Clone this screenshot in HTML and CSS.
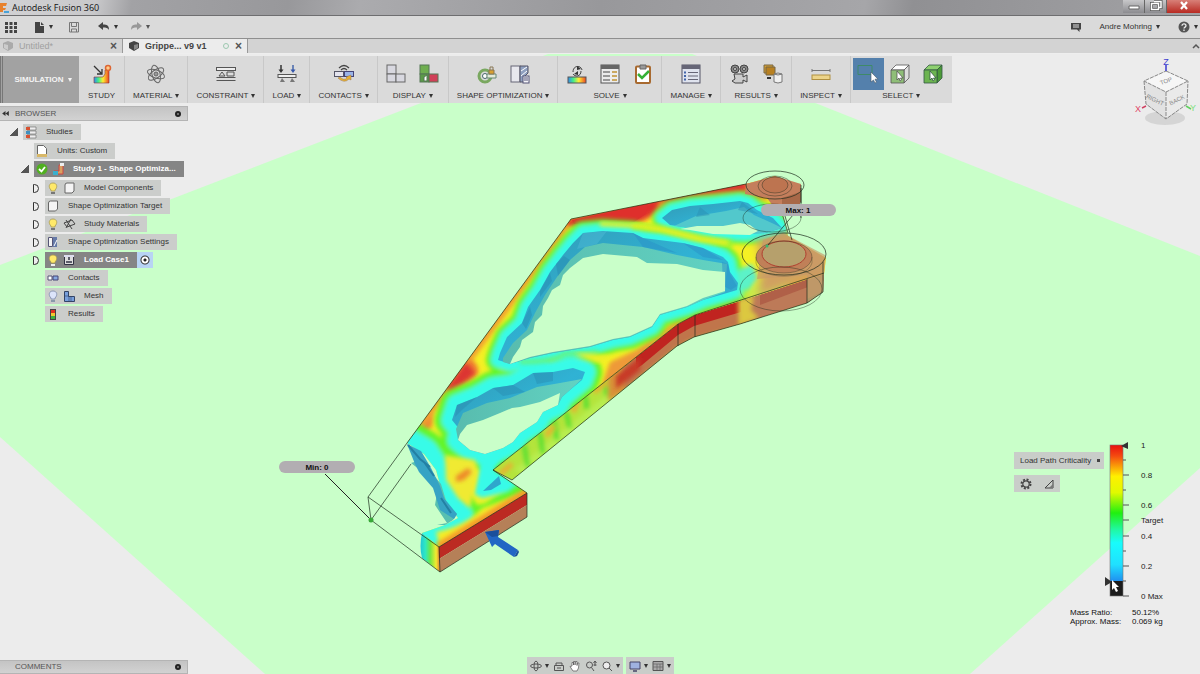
FILE: index.html
```html
<!DOCTYPE html>
<html lang="en">
<head>
    <meta charset="UTF-8">
    <meta name="viewport" content="width=device-width, initial-scale=1.0">
    <title>Autodesk Fusion 360</title>
    <link rel="stylesheet" href="styles.css">
</head>
<body>
    <header class="titlebar">
        <svg class="app-logo" viewBox="0 0 10 14"><path d="M0 2h7l-1 3H3v2h3L5 9H3v2H0z" fill="#e8812c"/><path d="M4 10h5v2H4z" fill="#4aa3d8"/></svg>
        <h1>Autodesk Fusion 360</h1>
        <div class="window-buttons">
            <button type="button" aria-label="Minimize"><svg viewBox="0 0 20 13"><path d="M5 6h10v3H5z" fill="#fff" stroke="#666"/></svg></button>
            <button type="button" aria-label="Restore"><svg viewBox="0 0 20 13"><path d="M8 1.500h7v6h-2M5.500 3.500h7v6h-7z" fill="none" stroke="#555" stroke-width="3"/><path d="M8 1.500h7v6h-2M5.500 3.500h7v6h-7z" fill="none" stroke="#fff" stroke-width="1.500"/></svg></button>
            <button type="button" class="close" aria-label="Close"><svg viewBox="0 0 20 13"><path d="M7 2l6 7M13 2l-6 7" stroke="#fff" stroke-width="2.200"/></svg></button>
        </div>
    </header>

    <div class="quickbar">
        <button type="button" aria-label="Data panel"><svg class="i12" viewBox="0 0 12 12"><path d="M0 1h3v3H0zM4.500 1h3v3h-3zM9 1h3v3H9zM0 5h3v3H0zM4.500 5h3v3h-3zM9 5h3v3H9zM0 9h3v3H0zM4.500 9h3v3h-3zM9 9h3v3H9z" fill="#444"/></svg></button>
        <button type="button" class="q-file" aria-label="File"><svg class="i12" viewBox="0 0 12 12"><path d="M2 1h5v4h4v7H2z" fill="#444"/><path d="M8 1l3 3H8z" fill="#444"/></svg><i class="caret"></i></button>
        <button type="button" class="q-save" aria-label="Save"><svg class="i12" viewBox="0 0 12 12"><path d="M1.500 1.500h9v9.500h-9zM3.500 1.500v4h5v-4M3.500 11V8h5v3" fill="none" stroke="#777"/></svg></button>
        <button type="button" class="q-undo" aria-label="Undo"><svg class="i12" viewBox="0 0 12 12"><path d="M0 5l5-4v2.500c4 0 6 1 6 5.500-1-2-3-2.500-6-2.500V9z" fill="#444"/></svg><i class="caret"></i></button>
        <button type="button" class="q-redo" aria-label="Redo"><svg class="i12" viewBox="0 0 12 12"><path d="M12 5L7 1v2.500C3 3.500 1 4.500 1 9c1-2 3-2.500 6-2.500V9z" fill="#888"/></svg><i class="caret"></i></button>
        <div class="quickbar-right">
            <button type="button" aria-label="Notifications"><svg class="i12" viewBox="0 0 12 12"><path d="M1 2h10v6.500H9.500V11L7 8.500H1z" fill="#444"/><path d="M3 4h6M3 6h6" stroke="#ddd"/></svg></button>
            <button type="button" class="q-user">Andre Mohring <i class="caret"></i></button>
            <button type="button" aria-label="Help"><svg class="i12" viewBox="0 0 12 12"><circle cx="6" cy="6" r="5.500" fill="#555"/><path d="M4 4.800c0-2.500 4-2.500 4 0C8 6.200 6 6 6 7.500M6 8.500v1.500" fill="none" stroke="#eee" stroke-width="1.300"/></svg><i class="caret"></i></button>
        </div>
    </div>

    <nav class="tabs">
        <a class="tab" href="#untitled"><svg class="i10" viewBox="0 0 10 10"><path d="M0 2l5-2 5 2v5l-5 3-5-3z" fill="#aaa"/><path d="M1 3l4 1v5L1 7z" fill="#ccc"/></svg><span>Untitled*</span><b class="x">&times;</b></a>
        <a class="tab active" href="#gripper"><svg class="i10" viewBox="0 0 10 10"><path d="M0 2l5-2 5 2v5l-5 3-5-3z" fill="#444"/><path d="M5 4l4-1v4L5 9z" fill="#888"/></svg><span>Grippe... v9 v1</span><i class="ring"></i><b class="x">&times;</b></a>
        <svg class="tabs-more" viewBox="0 0 8 6"><path d="M1 5l3-3 3 3" fill="none" stroke="#555" stroke-width="1.500"/></svg>
    </nav>

    <main class="viewport">
        <svg class="scene" viewBox="0 54 1200 620" preserveAspectRatio="xMidYMid slice">
            <defs>
                <filter id="soft" x="-20%" y="-20%" width="140%" height="140%"><feGaussianBlur stdDeviation="2"/></filter>
                <filter id="softer" x="-40%" y="-40%" width="180%" height="180%"><feGaussianBlur stdDeviation="4"/></filter>
                <clipPath id="face"><path d="M407 443L571 219 746 184 775 176 801 188 799 203 782 213 788 236 826 258 824 274 740 301 695 315 678 324 493 470 527 493 439 547 422 533 445 525 458 518 447 503 441 488 436 470 424 454z"/></clipPath>
                <clipPath id="side"><path d="M493 470L678 324 695 315 740 301 824 273 823 292 807 303 740 324 694 337 677 346 512 480z"/></clipPath>
                <linearGradient id="endface" x1="0" x2="1" y1="0" y2="0"><stop offset="0" stop-color="#22c8d8"/><stop offset=".25" stop-color="#2fe8c0"/><stop offset=".5" stop-color="#6de848"/><stop offset=".8" stop-color="#f2ea30"/><stop offset="1" stop-color="#e07830"/></linearGradient>
                <linearGradient id="wall" x1="0" x2="1" y1="0" y2="1"><stop offset="0" stop-color="#3299b4"/><stop offset=".5" stop-color="#30b2d4"/><stop offset="1" stop-color="#36a6c8"/></linearGradient>
                <linearGradient id="wallLow" x1="0" x2="1" y1="0" y2="0"><stop offset="0" stop-color="#58bcae"/><stop offset="1" stop-color="#62d2c2"/></linearGradient>
                <path id="holeTop" d="M662 218l10-8 18-4 23-2 27-3 8 2 9 7 16 8 9 10-17 5-20 1-32-1-23-5-20-3z"/>
                <path id="holeMid" d="M583 233l20-2 30 2 10 5 40 5 20 5 20 9 5 5 2 10 8 11-1 7-10 3-24 7-16 7-27 8-8 12-22 10-17 3-23 7-37 6-23 5-20 6-12-4 2-7 7-16 15-14 6-16 12-17 10-18 13-17 10-12z"/>
                <path id="holeLow" d="M452 420l5-15 20-8 16-9 20-3 20-12 20-1 20-4 12 4-3 8-12 10-8 7-4 8-15 7-6 10-17 11-7 9-10 6-18 6-15-4-12-10 2-10z"/>
                <path id="cut" d="M400 438l24 14 12 18 7 18 5 15 11 14-13 8-26 8v20"/>
            </defs>

            <path d="M548 54H692L1200 256V468L970 674H265L0 437V265z" fill="#c9ffc9"/>

            <!-- side walls -->
            <g clip-path="url(#side)">
                <path d="M480 300H840V490H480z" fill="#b4e43c"/>
                <g filter="url(#soft)">
                    <path d="M515 470l110-90v25l-90 75z" fill="#b8ee50"/>
                    <path d="M524 445l4 22M540 432l3 22M554 420l3 20M566 412l4 16M585 395l2 14M602 378l6 18" stroke="#5ce030" stroke-width="5"/>
                    <path d="M500 474l12-10M546 436l8-10M573 412l6-14M594 392l12-10" stroke="#e8b030" stroke-width="5"/>
                    <path d="M618 369L678 322 695 313 742 299V326L694 339 677 348 618 396z" fill="#c0744c"/>
                    <path d="M608 376l16-10v26l-16 10z" fill="#d89038"/>
                </g>
                <path d="M636 357l42-33 17-9 46-14v11l-47 14-16 9-36 30-6 4z" fill="#c02420"/>
                <path d="M616 376l24-19v13l-24 19z" fill="#c83a28" filter="url(#soft)"/>
                <path d="M741 301l83-28v18l-16 12-67 21z" fill="#bd7a58"/>
                <path d="M760 295l64-22v8l-64 24z" fill="#b06048"/>
                <path d="M807 277l18-6v24l-18 10z" fill="#b09868"/>
                <path d="M738 300l16-4-3 14 8 8-20 8z" fill="#dcc840" filter="url(#soft)"/>
            </g>

            <!-- top face with the criticality bands -->
            <g clip-path="url(#face)">
                <path d="M360 160H840V580H360z" fill="#f5f024"/>
                <g filter="url(#soft)">
                    <path d="M407 443L571 219" fill="none" stroke="#f0a030" stroke-width="8"/>
                    <path d="M610 374L678 322 695 313 824 272" fill="none" stroke="#f0a030" stroke-width="6"/>
                    <path d="M566 222l84-16 50-16 48-10 22 20-70 0-42 12-14 10-36 3-36 0z" fill="#f08a30"/>
                    <path d="M441 395l30-36c5 4 8 8 7 14-4 8-16 12-24 18z" fill="#f07a30"/>
                    <path d="M416 435l18-22-2 14-10 8z" fill="#f08a30"/>
                    <path d="M600 390l10-28 26-12 25-13-30 32z" fill="#ee9a38"/>
                </g>
                <path d="M650 203l20-8 76-14v10l-36 3-40 8z" fill="#e03030" filter="url(#soft)"/>
                <path d="M568 220l92-22-4 14-22 11h-30l-36 3z" fill="#df2f2c" filter="url(#soft)"/>
                <path d="M572 220l76-16-2 10-12 8h-30l-30 2z" fill="#df2f2c"/>
                <path d="M447 388l19-26 9 11-12 10-14 8z" fill="#dc3530" filter="url(#soft)"/>
                <g fill="none" stroke-linejoin="round" filter="url(#soft)">
                    <use href="#holeTop" stroke="#62f52c" stroke-width="20"/>
                    <use href="#holeMid" stroke="#62f52c" stroke-width="24"/>
                    <use href="#holeLow" stroke="#62f52c" stroke-width="34"/>
                    <use href="#cut" stroke="#62f52c" stroke-width="44"/>
                    <path d="M488 448l8 22 22 20-30 20-40 8" stroke="#62f52c" stroke-width="14"/>
                    <path d="M498 368l42-4 54-8" stroke="#7df23c" stroke-width="9"/>
                    <use href="#holeTop" stroke="#38fbe8" stroke-width="12"/>
                    <use href="#holeMid" stroke="#38fbe8" stroke-width="14"/>
                    <use href="#holeLow" stroke="#38fbe8" stroke-width="21"/>
                    <use href="#cut" stroke="#38fbe8" stroke-width="28"/>
                </g>
                <path d="M632 226l30 3 36 9 34 6" fill="none" stroke="#9cf430" stroke-width="7" filter="url(#soft)"/>
                <path d="M600 224l40 2 24 4 36 9 28 4" fill="none" stroke="#f4f024" stroke-width="4" filter="url(#soft)"/>
                <path d="M483 450l13-10 18-2-20 32 24 14-10 8-26 6-8-4z" fill="#38fbe8" filter="url(#soft)"/>
                <path d="M436 532q30-6 46-24 22-8 44-16v14l-84 48z" fill="#f4ee28" filter="url(#soft)"/>
                <path d="M439 547L530 491" fill="none" stroke="#f49a2a" stroke-width="9" filter="url(#soft)"/>
                <path d="M520 362q35 0 44-8l34-2M500 440l60-48" fill="none" stroke="#80f040" stroke-width="4" filter="url(#soft)" opacity=".7"/>
                <path d="M445 455l30 5 3 10-8 38-12-10-12-18z" fill="#f0ea30" filter="url(#soft)"/>
                <path d="M456 476l12-8 4 4-8 8-8 2z" fill="#ee8a2c" filter="url(#soft)"/>
                <path d="M574 353l18 1 20 2-15 7z" fill="#eef028" filter="url(#soft)"/>
                <path d="M742 292q20-18 46-16v14l-44 14z" fill="#c8f048" filter="url(#softer)"/>
                <path d="M738 270l14-6 6 14-10 12-10-2z" fill="#5cf2c8" filter="url(#soft)"/>
                <path d="M756 240l30-8 42 20-2 22-68 22 4-30z" fill="#d0a060" filter="url(#softer)"/>
            </g>

            <!-- hole walls -->
            <use href="#holeTop" fill="url(#wall)"/>
            <path d="M674 226l22-10 30-5 18-4 10 8 20 9 8 4-17 5-20 1-32-1-23-5z" fill="#52c8cc"/>
            <path d="M700 207l10 8-14 2zM742 202l16 12-20-4z" fill="#2b8fb4" opacity=".5"/>
            <path d="M680 229l17-3 26 0 17-3 10 2 8 6-8 4-37-1-23-4z" fill="#c9ffc9"/>
            <use href="#holeMid" fill="url(#wall)"/>
            <path d="M510 364L503 362 503 358 513 343 527 330 535 313 545 295 557 277 570 260 585 247 603 243 643 247 677 255 703 260 727 264 725 292 703 300 687 307 660 315 652 327 630 337 613 340 590 347 553 353 530 358z" fill="url(#wallLow)"/>
            <path d="M556 264l8-8 6 4-12 16zM540 291l10-18 2 8-12 16zM522 323l8-16 2 8-6 14z" fill="#2585ac" opacity=".4"/>
            <path d="M633 233l10 14 34 6-34-15zM683 243l20 14 20 3-20-12zM722 262l6 2 2 10 7 12-6 4-8-4z" fill="#2a90c8" opacity=".5"/>
            <path d="M583 233l-6 16 20-5 10-13z" fill="#60c8e0" opacity=".3"/>
            <path d="M510 364L513 357 520 347 522 340 533 332 535 322 542 315 543 306 548 298 552 290 560 285 563 275 570 268 583 258 603 254 637 257 647 263 677 264 703 270 725 272 725 291 703 298 687 306 660 314 652 326 630 336 613 339 590 346 553 352 530 357z" fill="#c9ffc9"/>
            <use href="#holeLow" fill="url(#wall)"/>
            <path d="M456 429L463 413 487 403 510 398 537 387 560 383 582 379 570 390 562 397 558 405 543 412 537 422 520 433 513 442 503 448 485 454 470 450 458 440z" fill="url(#wallLow)"/>
            <path d="M457 405l20-8-14 12-8 8zM493 388l10 8 22-4-12-7zM533 373l4 11 16-3 0-9z" fill="#2786ac" opacity=".4"/>
            <path d="M458 440L460 434 467 425 483 420 500 413 512 408 520 407 540 402 560 393 558 405 543 412 537 422 520 433 513 442 503 448 485 454 470 450z" fill="#c9ffc9"/>
            <path d="M411 463l18 14 8 16-2 12 12 18-10 2 8 0 8-5 4-6-10-10-6-20-20-24z" fill="#58c0b0"/>
            <path d="M407 444l14 7 10 17 9 18 4 12 13 16-3 5-14-9-7-22-14-16-4-8z" fill="#36a3c4"/>
            <path d="M408 445l12 14 10 8M424 462l10 14M441 498l10 15" stroke="#2380a4" stroke-width="2" fill="none"/>
            <path d="M483 491l16-15 2 8-10 6z" fill="#2fa6cc"/>

            <!-- clamping block -->
            <path d="M422 533l17 14 1 25-18-14q-3-12 0-25z" fill="url(#endface)"/>
            <path d="M439 547l88-54v12l-88 54z" fill="#bc2a22"/>
            <path d="M439 559l88-54v12l-87 55z" fill="#b58058"/>

            <!-- pins -->
            <path d="M746 184l29-8 26 8v18l-22 12-12-16-22-4z" fill="#c47e5c"/>
            <path d="M782 198l18-6v12l-18 8z" fill="#a86848"/>
            <path d="M763 240l20-7 42 22-2 36-16 8v-24l-50 4z" fill="#c89868" opacity=".65"/>
            <ellipse cx="784" cy="257" rx="28" ry="16" fill="#c08058"/>
            <ellipse cx="784" cy="254" rx="22" ry="13" fill="#b6a06c" stroke="#b04030"/>
            <ellipse cx="775" cy="185" rx="13" ry="8" fill="#bd7450"/>

            <g class="wire">
                <path d="M571 219L407 443 368 497 439 547 527 493 493 470 678 324 695 315 824 273M571 219L746 184M439 547l1 25 87-55V493M440 572L371 520 368 497M371 520l40-56M512 480L677 346l17-9 46-13 67-21 16-11V262M678 324v22M695 315v22M807 279v24M801 188v15"/>
                <path d="M493 470l19 10M782 213l6 20M785 216l7 24M793 215l-25 30M801 185v33"/>
                <ellipse cx="784" cy="254" rx="42" ry="21"/>
                <ellipse cx="781" cy="289" rx="41" ry="22" opacity=".6"/>
                <ellipse cx="784" cy="257" rx="28" ry="16" opacity=".5"/>
                <path d="M756 257v6c3 17 51 18 56 0v-6" opacity=".4"/>
                <ellipse cx="775" cy="185" rx="29" ry="14"/>
                <ellipse cx="772" cy="218" rx="29" ry="14" opacity=".6"/>
                <ellipse cx="775" cy="186" rx="17" ry="10" opacity=".6"/>
                <ellipse cx="775" cy="185" rx="13" ry="8" opacity=".6"/>
            </g>
            <path d="M325 474L371 520" stroke="#222"/>
            <circle cx="371" cy="520" r="2.500" fill="#38a838"/>
            <circle cx="767" cy="246" r="1.500" fill="#38b870"/>
            <path d="M485 532L499 530 498 537 518 550 514 557 495 544 492 547z" fill="#2266c4"/>
            <path d="M485 532L499 530 498 536 492 537zM518 550L514 557 517 556 519 552z" fill="#1a4f9c"/>

            <g class="callout">
                <rect x="279" y="461" width="76" height="12" rx="6"/>
                <text x="317" y="470">Min: 0</text>
                <rect x="761" y="204" width="75" height="12" rx="6"/>
                <text x="798" y="213">Max: 1</text>
            </g>
        </svg>

        <div class="toolbar">
            <button type="button" class="workspace"><span>SIMULATION</span><i class="caret"></i></button>
            <div class="group">
                <div class="icons"><button type="button" aria-label="New study"><svg viewBox="0 0 20 20"><defs><linearGradient id="heat"><stop offset="0" stop-color="#38e"/><stop offset=".3" stop-color="#4e8"/><stop offset=".6" stop-color="#fe3"/><stop offset="1" stop-color="#e42"/></linearGradient></defs><path d="M2 13h9l2-3V6h4v13H2z" fill="url(#heat)" stroke="#833" stroke-width=".6"/><circle cx="16" cy="4" r="2.500" fill="#fc8" stroke="#d63" stroke-width="1.500"/><path d="M2 2l8 8M10 5v5H5" fill="none" stroke="#333" stroke-width="1.300"/></svg></button></div>
                <button type="button" class="label">STUDY</button>
            </div>
            <div class="group">
                <div class="icons"><button type="button" aria-label="Material"><svg viewBox="0 0 20 20" fill="none" stroke="#666"><ellipse cx="10" cy="10" rx="9" ry="4" transform="rotate(20 10 10)"/><ellipse cx="10" cy="10" rx="9" ry="4" transform="rotate(75 10 10)"/><ellipse cx="10" cy="10" rx="9" ry="4" transform="rotate(-35 10 10)"/><circle cx="10" cy="10" r="2" fill="#999"/></svg></button></div>
                <button type="button" class="label">MATERIAL <i class="caret"></i></button>
            </div>
            <div class="group">
                <div class="icons"><button type="button" aria-label="Constraint"><svg viewBox="0 0 20 20" fill="none" stroke="#555"><rect x=".5" y="3.500" width="19" height="3" fill="#eee"/><path d="M.5 13.500h19M3 12l3-4 3 4zM11 8h7v4h-7zM.5 16.500h19" fill="#ddd"/></svg></button></div>
                <button type="button" class="label">CONSTRAINT <i class="caret"></i></button>
            </div>
            <div class="group">
                <div class="icons"><button type="button" aria-label="Load"><svg viewBox="0 0 20 20"><rect x="1" y="10.500" width="18" height="3" fill="#eee" stroke="#555"/><path d="M5 14l-2 4h5zM15 14l-2 4h5z" fill="#777"/><path d="M4 1v6" stroke="#333" stroke-width="1.500"/><path d="M1.500 5.500h5L4 9z" fill="#333"/><path d="M16 1v6" stroke="#46a" stroke-width="1.500"/><path d="M13.500 5.500h5L16 9z" fill="#35a"/></svg></button></div>
                <button type="button" class="label">LOAD <i class="caret"></i></button>
            </div>
            <div class="group">
                <div class="icons"><button type="button" aria-label="Contacts"><svg viewBox="0 0 20 20"><path d="M5 4q5-5 10 0M7 6q3-3 6 0" fill="none" stroke="#444" stroke-width="1.200"/><rect x=".5" y="7.500" width="9" height="5" fill="#e4e4ee" stroke="#556"/><rect x="10.500" y="7.500" width="9" height="5" fill="#9ab4e8" stroke="#447"/><path d="M4 14q6 6 11 1l2 1v-5l-5 2 1 1q-3 3-7-1z" fill="#e8b030" stroke="#975" stroke-width=".5"/></svg></button></div>
                <button type="button" class="label">CONTACTS <i class="caret"></i></button>
            </div>
            <div class="group">
                <div class="icons">
                    <button type="button" aria-label="Cells"><svg viewBox="0 0 20 20" fill="#d8d8e0" stroke="#666"><rect x="1" y="1" width="9" height="9"/><rect x="1" y="10" width="9" height="8"/><rect x="10" y="10" width="9" height="8"/></svg></button>
                    <button type="button" aria-label="Coloured cells"><svg viewBox="0 0 20 20" stroke="#575"><rect x="1" y="1" width="9" height="9" fill="#6fae50"/><rect x="1" y="10" width="9" height="8" fill="#5a9a48"/><rect x="10" y="10" width="9" height="8" fill="#d04058"/><path d="M5 17v-4l3-2v6z" fill="#fff"/></svg></button>
                </div>
                <button type="button" class="label">DISPLAY <i class="caret"></i></button>
            </div>
            <div class="group">
                <div class="icons">
                    <button type="button" aria-label="Preserve region"><svg viewBox="0 0 20 20"><circle cx="8" cy="12" r="6" fill="none" stroke="#7aa860" stroke-width="3"/><circle cx="8" cy="12" r="2.500" fill="#fff" stroke="#466"/><path d="M10 10h9v4h-9z" fill="#e4ead8" stroke="#687"/><path d="M12 6h5v4h-5z" fill="#d8a030" stroke="#875"/><path d="M13 6V3h3v3" fill="none" stroke="#875"/></svg></button>
                    <button type="button" aria-label="Shape settings"><svg viewBox="0 0 20 20"><rect x="1" y="2" width="9" height="16" fill="#e8e8ee" stroke="#667"/><path d="M10 2h8v7l-4 4v5h-4z" fill="#8fa0c0" stroke="#556"/><path d="M11 7l6-4M11 12l6-5" stroke="#fff"/><rect x="13" y="12" width="6" height="7" fill="#f4f4f8" stroke="#557"/><path d="M14 14h4M14 16h4" stroke="#557"/></svg></button>
                </div>
                <button type="button" class="label">SHAPE OPTIMIZATION <i class="caret"></i></button>
            </div>
            <div class="group">
                <div class="icons">
                    <button type="button" aria-label="Solve"><svg viewBox="0 0 20 20"><rect x="1" y="13" width="18" height="6" fill="url(#heat)" stroke="#555"/><path d="M6 8c0-7 8-7 9-2M14 7c0 6-6 6-8 3" fill="none" stroke="#444"/><path d="M7 10l4-3v4zM14 5l-4-3v4z" fill="#333"/></svg></button>
                    <button type="button" aria-label="Solve details"><svg viewBox="0 0 20 20"><rect x="1" y="1" width="18" height="18" fill="#ececec" stroke="#555"/><path d="M1 1h18v4H1z" fill="#666"/><path d="M3 8h7M3 12h7M3 16h7" stroke="#999" stroke-width="2"/><path d="M12 8h5M12 12h5M12 16h5" stroke="#caa860" stroke-width="2"/></svg></button>
                    <button type="button" aria-label="Pre-check"><svg viewBox="0 0 20 20"><rect x="3" y="2.500" width="14" height="16.500" rx="1" fill="#fff" stroke="#a86a30" stroke-width="2"/><path d="M7 1h6v4H7z" fill="#999" stroke="#666"/><path d="M5 10l4 4 7-7" fill="none" stroke="#35b035" stroke-width="2.500"/></svg></button>
                </div>
                <button type="button" class="label">SOLVE <i class="caret"></i></button>
            </div>
            <div class="group">
                <div class="icons"><button type="button" aria-label="Manage"><svg viewBox="0 0 20 20"><rect x="1" y="1" width="18" height="18" fill="#dfe3ee" stroke="#556"/><path d="M1 1h18v4H1z" fill="#667"/><path d="M7 8.500h10M7 12h10M7 15.500h10" stroke="#667"/><path d="M3 8.500h2M3 12h2M3 15.500h2" stroke="#46a" stroke-width="2"/></svg></button></div>
                <button type="button" class="label">MANAGE <i class="caret"></i></button>
            </div>
            <div class="group">
                <div class="icons">
                    <button type="button" aria-label="Animate"><svg viewBox="0 0 20 20" stroke="#444"><circle cx="5" cy="5" r="4" fill="#888"/><circle cx="14" cy="5" r="4" fill="#888"/><circle cx="5" cy="5" r="1.500" fill="#ddd"/><circle cx="14" cy="5" r="1.500" fill="#ddd"/><path d="M4 10h9v3l4-2v7l-4-2v3H5l-3-2 3-2z" fill="#ccc"/></svg></button>
                    <button type="button" aria-label="Promote results"><svg viewBox="0 0 20 20"><path d="M1 1h9v8H1z" fill="#d8a030" stroke="#764"/><path d="M3 3h9v8H3z" fill="#b88020" stroke="#764"/><path d="M4 14h4" stroke="#333" stroke-width="2"/><path d="M11 10v8q4 2 8 0v-8q-4-2-8 0z" fill="#f0f0f0" stroke="#777"/><path d="M11 10q4 2 8 0" fill="none" stroke="#777"/></svg></button>
                </div>
                <button type="button" class="label">RESULTS <i class="caret"></i></button>
            </div>
            <div class="group">
                <div class="icons"><button type="button" aria-label="Inspect"><svg viewBox="0 0 20 20"><path d="M1 6.500h18M1 5v3M19 5v3" stroke="#777"/><rect x="1" y="11" width="18" height="4.500" fill="#ecd48a" stroke="#b09040"/></svg></button></div>
                <button type="button" class="label">INSPECT <i class="caret"></i></button>
            </div>
            <div class="group">
                <div class="icons">
                    <button type="button" class="picked" aria-label="Window select"><svg viewBox="0 0 20 20"><path d="M0 1.500h14v9H0z" fill="none" stroke="#3f8a68"/><path d="M13 8v10l2.500-2 1.500 3 1.500-.8-1.500-3H20z" fill="#fff" stroke="#456" stroke-width=".6"/></svg></button>
                    <button type="button" aria-label="Select faces"><svg viewBox="0 0 20 20" stroke="#555" stroke-width=".8"><path d="M1 6l5-5h13l-5 5z" fill="#fff"/><path d="M14 6l5-5v13l-5 5z" fill="#ddd"/><path d="M1 6h13v13H1z" fill="#8fbe78"/><path d="M7 7v9l2-2 1 3 1.500-1-1-2h2.500z" fill="#fff"/></svg></button>
                    <button type="button" aria-label="Select bodies"><svg viewBox="0 0 20 20" stroke="#354" stroke-width=".8"><path d="M1 6l5-5h13l-5 5z" fill="#8ed070"/><path d="M14 6l5-5v13l-5 5z" fill="#4c9a38"/><path d="M1 6h13v13H1z" fill="#6cb450"/><path d="M7 7v9l2-2 1 3 1.500-1-1-2h2.500z" fill="#fff"/></svg></button>
                </div>
                <button type="button" class="label">SELECT <i class="caret"></i></button>
            </div>
        </div>

        <aside class="browser">
            <h2 class="panel-head"><svg class="rewind" viewBox="0 0 8 6"><path d="M4 0v6L0 3zM8 0v6L4 3z" fill="#333"/></svg><span>BROWSER</span><i class="knob"></i></h2>
            <ul class="tree">
                <li><i class="open"></i><div class="node"><svg viewBox="0 0 16 16"><path d="M4 3h9v3H4zM4 7h9v3H4zM4 11h9v3H4z" fill="#eee" stroke="#666" stroke-width=".6"/><path d="M3 3h4v3H3zM3 11h4v3H3z" fill="#d85030"/><path d="M3 7h4v3H3z" fill="#4090c0"/></svg><span>Studies</span></div>
                    <ul>
                        <li><div class="node leaf"><svg viewBox="0 0 16 16"><path d="M3.500 2.500h6l3 3v8h-9z" fill="#fff" stroke="#666"/><path d="M3 11h10v3H3z" fill="#d8b868"/></svg><span>Units: Custom</span></div></li>
                        <li><i class="open"></i><div class="node strong"><svg viewBox="0 0 16 16"><circle cx="8" cy="8" r="5.500" fill="#50b020"/><path d="M5 8l2.500 2.500L11 6" fill="none" stroke="#fff" stroke-width="1.800"/></svg><svg viewBox="0 0 16 16"><path d="M4 10h5V4h4v9H4z" fill="#d8a060" stroke="#c44"/><path d="M3 10h5v4H3z" fill="#3ab0d0"/><path d="M10 2h4v3h-4z" fill="#eee"/></svg><span>Study 1 - Shape Optimiza...</span></div>
                            <ul>
                                <li><i class="closed"></i><div class="node"><svg class="bulb" viewBox="0 0 16 16"><path d="M6 10C3 7 4 3 8 3s5 4 2 7v1H6z" fill="#ffe96a" stroke="#a89a50" stroke-width=".8"/><path d="M6 12h4v2H6z" fill="#777"/></svg><svg viewBox="0 0 16 16"><path d="M4 5q0-2 2-2h7v8l-2 2H4z" fill="#f4f4f4" stroke="#666"/></svg><span>Model Components</span></div></li>
                                <li><i class="closed"></i><div class="node"><svg viewBox="0 0 16 16"><path d="M3.500 5q0-2 2-2h7v8l-2 2h-7z" fill="#f4f4f4" stroke="#666"/></svg><span>Shape Optimization Target</span></div></li>
                                <li><i class="closed"></i><div class="node"><svg class="bulb" viewBox="0 0 16 16"><path d="M6 10C3 7 4 3 8 3s5 4 2 7v1H6z" fill="#ffe96a" stroke="#a89a50" stroke-width=".8"/><path d="M6 12h4v2H6z" fill="#777"/></svg><svg viewBox="0 0 16 16" fill="none" stroke="#444"><path d="M3 7l8-3 3 4-8 3zM5 4l6 9M10 3L5 12"/></svg><span>Study Materials</span></div></li>
                                <li><i class="closed"></i><div class="node"><svg viewBox="0 0 16 16"><path d="M3.500 3.500h4v9h-4z" fill="#f4f4f4" stroke="#557"/><path d="M8 3h4v10H8z" fill="#667aa8"/><path d="M9 12l3-6" stroke="#fff"/></svg><span>Shape Optimization Settings</span></div></li>
                                <li><i class="closed"></i><div class="node strong"><svg class="bulb" viewBox="0 0 16 16"><path d="M6 10C3 7 4 3 8 3s5 4 2 7v1H6z" fill="#ffe96a" stroke="#a89a50" stroke-width=".8"/><path d="M6 12h4v2H6z" fill="#eee"/></svg><svg viewBox="0 0 16 16"><path d="M3.500 4.500h9v8h-9z" fill="#ddd" stroke="#334"/><path d="M3 3h10v2H3z" fill="#dde"/><path d="M8 5v3M5 10h6" stroke="#334" stroke-width="1.500"/></svg><span>Load Case1</span></div><input type="radio" class="case" aria-label="Load Case1" checked></li>
                                <li><div class="node leaf"><svg viewBox="0 0 16 16"><path d="M3 6h4v4H3z" fill="#fff" stroke="#557"/><path d="M8 6h5v4H8z" fill="#88a8e0" stroke="#447"/></svg><span>Contacts</span></div></li>
                                <li><div class="node leaf"><svg viewBox="0 0 16 16"><path d="M6 10C3 7 4 3 8 3s5 4 2 7v1H6z" fill="#dce4fa" stroke="#7a86a8" stroke-width=".8"/><path d="M6 12h4v2H6z" fill="#89a"/></svg><svg viewBox="0 0 16 16"><path d="M3.500 3.500h4v5h6v5h-10z" fill="#78a0dc" stroke="#346"/><path d="M4 8h4v5M10 9v4" fill="none" stroke="#346" stroke-width=".6"/></svg><span>Mesh</span></div></li>
                                <li><div class="node leaf"><svg viewBox="0 0 16 16"><path d="M5 3h6v11H5z" fill="#444"/><path d="M6 4h4v3H6z" fill="#e03020"/><path d="M6 7h4v3H6z" fill="#f0c830"/><path d="M6 10h4v3H6z" fill="#40b040"/></svg><span>Results</span></div></li>
                            </ul>
                        </li>
                    </ul>
                </li>
            </ul>
        </aside>

        <svg class="viewcube" viewBox="0 0 66 74">
            <ellipse cx="32" cy="62" rx="20" ry="7" fill="#ccc" opacity=".7"/>
            <path d="M33 15L55 25 33 36 11 25z" fill="#f6f6f6"/>
            <path d="M11 25L33 36V63L13 48z" fill="#e2e2e2"/>
            <path d="M55 25L33 36V63L54 48z" fill="#eaeaea"/>
            <path d="M33 15L55 25 33 36 11 25zM11 25L13 48 33 63 54 48 55 25M33 36V63" fill="none" stroke="#888" stroke-dasharray="4 1"/>
            <text class="cube-text" x="22" y="46" transform="rotate(26 22 44)">RIGHT</text>
            <text class="cube-text" x="44" y="46" transform="rotate(-26 44 44)">BACK</text>
            <text class="cube-text" x="33" y="27" transform="rotate(-20 33 25)">TOP</text>
            <path d="M33 9v6" stroke="#3a3ad0" stroke-width="1.500"/><path d="M9 52l4-2" stroke="#d04060" stroke-width="1.500"/><path d="M53 50l5 3" stroke="#60d060" stroke-width="1.500"/>
            <text class="axis" x="33" y="9" fill="#4040d0">Z</text>
            <text class="axis" x="5" y="56" fill="#e04868">X</text>
            <text class="axis" x="60" y="55" fill="#80e080">Y</text>
        </svg>

        <section class="legend">
            <div class="legend-tools">
                <select aria-label="Result type"><option>Load Path Criticality</option></select>
                <div class="legend-buttons">
                    <button type="button" aria-label="Legend settings"><svg class="i12" viewBox="0 0 12 12"><circle cx="6" cy="6" r="4.500" fill="none" stroke="#444" stroke-width="2" stroke-dasharray="2 1.530"/><circle cx="6" cy="6" r="3.200" fill="none" stroke="#444" stroke-width="1.200"/></svg></button>
                    <button type="button" aria-label="Legend size"><svg class="i12" viewBox="0 0 12 12"><path d="M2 10L10 2v8z" fill="none" stroke="#444"/><path d="M6 10l4-4v4z" fill="#777"/></svg></button>
                </div>
            </div>
            <svg class="scale" viewBox="0 0 62 162">
                <defs><linearGradient id="ramp" x1="0" x2="0" y1="0" y2="1"><stop offset="0" stop-color="#e81010"/><stop offset=".08" stop-color="#f44a10"/><stop offset=".23" stop-color="#fff000"/><stop offset=".35" stop-color="#e0fa00"/><stop offset=".5" stop-color="#20f010"/><stop offset=".62" stop-color="#20f8a0"/><stop offset=".72" stop-color="#18fcfc"/><stop offset=".88" stop-color="#20e0ff"/><stop offset="1" stop-color="#2090f0"/></linearGradient></defs>
                <rect x="6" y="5" width="13" height="136" fill="url(#ramp)"/>
                <rect x="6" y="141" width="13" height="15" fill="#1c1c1c"/>
                <rect x="6" y="5" width="13" height="151" fill="none" stroke="#777" stroke-width=".6"/>
                <path d="M19 20h3M19 35h6M19 50h3M19 65h6M19 80h6M19 96h6M19 111h3M19 126h6M19 141h3M19 156h6" stroke="#555"/>
                <path d="M24 2v7l-7-3zM1 137v9l7-4z" fill="#333"/>
                <path d="M8 140v10l2-2 2 4 2-1-2-4h3z" fill="#fff"/>
                <text x="37" y="8">1</text>
                <text x="37" y="38">0.8</text>
                <text x="37" y="68">0.6</text>
                <text x="37" y="83">Target</text>
                <text x="37" y="99">0.4</text>
                <text x="37" y="129">0.2</text>
                <text x="37" y="159">0 Max</text>
            </svg>
            <dl class="mass">
                <dt>Mass Ratio:</dt><dd>50.12%</dd>
                <dt>Approx. Mass:</dt><dd>0.069 kg</dd>
            </dl>
        </section>

        <div class="navbar">
            <div class="nav-set">
                <button type="button" aria-label="Orbit"><svg class="i12" viewBox="0 0 12 12" fill="none" stroke="#555"><ellipse cx="6" cy="6" rx="5.500" ry="2"/><ellipse cx="6" cy="6" rx="2" ry="5"/></svg><i class="caret"></i></button>
                <button type="button" aria-label="Look at"><svg class="i12" viewBox="0 0 12 12" fill="none" stroke="#555"><path d="M1.500 5.500h9v5h-9zM3 5V3h6v2M4 8h4"/></svg></button>
                <button type="button" aria-label="Pan"><svg class="i12" viewBox="0 0 12 12"><path d="M3 6V2.500h1.500V5 1.500H6V5l.5-3.500H8V5.500l.5-2.500h1.500L9.500 8 8 11H4L1 6.500z" fill="#fff" stroke="#555" stroke-width=".7"/></svg></button>
                <button type="button" aria-label="Zoom"><svg class="i12" viewBox="0 0 12 12" fill="none" stroke="#555"><circle cx="4.500" cy="5" r="3"/><path d="M6.500 7.500L9 11M10 1v5M8.500 3L10 1l1.500 2M8.500 5h3"/></svg></button>
                <button type="button" aria-label="Fit"><svg class="i12" viewBox="0 0 12 12" fill="none" stroke="#555"><circle cx="5.500" cy="5.500" r="3.500" fill="#eee"/><path d="M8 8l3 3"/></svg><i class="caret"></i></button>
            </div>
            <div class="nav-set">
                <button type="button" aria-label="Display settings"><svg class="i12" viewBox="0 0 12 12"><path d="M1 2h10v7H1z" fill="#9fb2e0" stroke="#446"/><path d="M4 11h4" stroke="#446" stroke-width="1.500"/></svg><i class="caret"></i></button>
                <button type="button" aria-label="Grid settings"><svg class="i12" viewBox="0 0 12 12"><path d="M1 1.500h10v9H1z" fill="#aaa" stroke="#555"/><path d="M1 4h10M1 7h10M5 4v6M8 4v6" stroke="#666" stroke-width=".7"/></svg><i class="caret"></i></button>
            </div>
        </div>

        <h2 class="panel-head comments"><span>COMMENTS</span><i class="knob"></i></h2>
    </main>
</body>
</html>
```
FILE: styles.css
```css
* {
    box-sizing: border-box;
}
body {
    display: flex;
    flex-direction: column;
    min-height: 100vh;
    margin: 0;
    font-family: 'Liberation Sans', Arial, sans-serif;
    font-size: 8px;
    line-height: 12px;
    color: #333;
    background-color: #ececec;
}
button {
    display: flex;
    align-items: center;
    padding: 0;
    border: none;
    background: none;
    font: inherit;
    color: inherit;
    cursor: pointer;
}
h1, h2, ul, dl, dd {
    margin: 0;
    padding: 0;
    font-weight: normal;
    list-style: none;
}
svg {
    display: block;
    flex: none;
}
.i12 {
    width: 12px;
    height: 12px;
}
.i10 {
    width: 10px;
    height: 10px;
}
.caret {
    display: inline-block;
    flex: none;
    border: 2px solid transparent;
    border-top: 4px solid #333;
    border-bottom: none;
}

/* window frame */
.titlebar {
    display: flex;
    align-items: center;
    height: 16px;
    background: linear-gradient(100deg, #d2d2d4 0, #c8c8ca 8%, #a2a2a5 11%, #98989b 24%, #ababae 30%, #98989b 50%, #a6a6a9 72%, #909093 76%, #a2a2a5 100%);
    border-bottom: 1px solid #6e6e70;
}
.app-logo {
    width: 10px;
    height: 14px;
}
.titlebar h1 {
    margin-left: 2px;
    font-family: 'Open Sans', 'Noto Sans', sans-serif;
    font-size: 9px;
    color: #111;
}
.window-buttons {
    display: flex;
    align-self: flex-start;
    margin-left: auto;
}
.window-buttons button {
    justify-content: center;
    width: 22px;
    height: 13px;
    background: linear-gradient(#c8c8ca, #8c8c90);
    border-right: 1px solid #666;
}
.window-buttons svg {
    width: 20px;
    height: 13px;
}
.window-buttons .close {
    width: 33px;
    background: linear-gradient(#d88078, #b82a22);
    border: none;
}
.quickbar {
    display: flex;
    align-items: center;
    height: 23px;
    padding: 0 2px 0 5px;
    background-color: #dadada;
    border-bottom: 1px solid #8f8f8f;
}
.quickbar button {
    gap: 4px;
}
.q-file {
    margin-left: 16px;
}
.q-save {
    margin-left: 15px;
}
.q-undo {
    margin-left: 18px;
}
.q-redo {
    margin-left: 12px;
    opacity: 0.8;
}
.quickbar-right {
    display: flex;
    align-items: center;
    gap: 18px;
    margin-left: auto;
}
.tabs {
    display: flex;
    height: 15px;
    background-color: #d3d3d3;
    border-bottom: 1px solid #eee;
}
.tab {
    display: flex;
    align-items: center;
    gap: 6px;
    width: 123px;
    padding: 0 5px 0 3px;
    border-right: 1px solid #999;
    font-size: 9px;
    color: #a0a0a0;
    text-decoration: none;
}
.tab.active {
    width: 125px;
    padding-left: 6px;
    background-color: #ececec;
    font-weight: bold;
    color: #444;
}
.tab .x {
    margin-left: auto;
    font-size: 12px;
    color: #555;
}
.ring {
    width: 6px;
    height: 6px;
    margin-left: auto;
    border: 1px solid #9cc8b0;
    border-radius: 50%;
}
.ring + .x {
    margin-left: 0;
}
.tabs-more {
    width: 8px;
    height: 6px;
    margin: 4px 0 0 auto;
}

/* canvas and everything that floats on it */
.viewport {
    position: relative;
    flex: 1;
    overflow: hidden;
}
.scene {
    position: absolute;
    top: 0;
    left: 0;
    width: 100%;
    height: 100%;
}
.wire {
    fill: none;
    stroke: #1c2c1c;
    stroke-width: 0.7;
}
.callout rect {
    fill: #b2aeb2;
}
.callout text {
    font-weight: bold;
    text-anchor: middle;
    fill: #111;
}

.toolbar {
    position: relative;
    display: flex;
    width: max-content;
    height: 47px;
    margin-top: 2px;
    background-color: #dadada;
}
.workspace {
    justify-content: center;
    gap: 4px;
    width: 79px;
    padding-left: 4px;
    background-color: #a2a2a2;
    border-left: 3px double #777;
    font-weight: bold;
    color: #f4f4f4;
}
.workspace .caret {
    border-top-color: #f4f4f4;
}
.group {
    display: flex;
    flex-direction: column;
    align-items: center;
    min-width: 46px;
    padding: 2px 2px 0;
    border-right: 1px solid #c8c8c8;
}
.group:last-child {
    border-right: none;
}
.icons {
    display: flex;
}
.icons button {
    justify-content: center;
    width: 33px;
    height: 32px;
}
.icons svg {
    width: 20px;
    height: 20px;
    overflow: visible;
}
.icons .picked {
    width: 31px;
    background-color: #5480ac;
}
.label {
    gap: 3px;
    padding: 0 6px;
    white-space: nowrap;
}

.browser {
    position: relative;
    width: 188px;
    margin-top: 3px;
}
.panel-head {
    display: flex;
    align-items: center;
    gap: 6px;
    height: 15px;
    padding: 0 6px 0 2px;
    background: linear-gradient(#c4c4c4, #d2d2d2);
    border: 1px solid #b4b4b4;
    border-left: none;
    font-size: 8px;
    color: #555;
}
.rewind {
    width: 7px;
    height: 5px;
}
.knob {
    width: 6px;
    height: 6px;
    margin-left: auto;
    border: 2px solid #222;
    border-radius: 50%;
    background-color: #888;
}
.tree {
    width: 260px;
    padding: 2px 0 0 11px;
}
.tree ul {
    padding: 1px 0 0 11px;
}
.tree li {
    display: flex;
    flex-wrap: wrap;
    align-items: center;
}
.tree li > ul {
    width: 100%;
}
.node {
    display: flex;
    align-items: center;
    height: 16px;
    margin: 1px 0;
    padding-right: 8px;
    background-color: #cbcdcb;
    white-space: nowrap;
}
.node svg {
    width: 16px;
    height: 16px;
}
.node span {
    margin-left: 7px;
}
.leaf {
    margin-left: 12px;
}
.strong {
    background-color: #858585;
    font-weight: bold;
    color: #fff;
}
.open {
    width: 8px;
    height: 8px;
    margin: 0 5px 0 -1px;
    background: linear-gradient(135deg, transparent 50%, #555 50%);
}
.closed {
    width: 6px;
    height: 9px;
    margin-right: 6px;
    border: 1px solid #333;
    border-radius: 0 6px 6px 0;
    background-color: #eee;
}
.case {
    appearance: none;
    width: 16px;
    height: 16px;
    margin: 0;
    background: radial-gradient(circle, #222 0 1px, #fff 2px 3px, #333 4px, #b8d4f4 5px);
}

.viewcube {
    position: absolute;
    top: 2px;
    right: 1px;
    width: 66px;
    height: 74px;
}
.cube-text {
    font-size: 6px;
    text-anchor: middle;
    fill: #888;
}
.axis {
    font-size: 9px;
    text-anchor: middle;
}

.legend {
    position: absolute;
    right: 34px;
    bottom: 48px;
    display: grid;
    grid-template-columns: 90px 62px;
    justify-content: end;
}
.legend-tools {
    padding-top: 12px;
}
.legend select {
    appearance: none;
    width: 90px;
    height: 17px;
    padding: 0 6px;
    border: none;
    border-radius: 0;
    background: linear-gradient(#444, #444) 83px 7px / 3px 3px no-repeat #c9cdc9;
    font: inherit;
    color: #333;
}
.legend-buttons {
    display: flex;
    justify-content: space-around;
    width: 46px;
    height: 17px;
    margin-top: 6px;
    background-color: #c9cdc9;
}
.scale {
    width: 62px;
    height: 162px;
    overflow: visible;
    fill: #222;
}
.mass {
    display: grid;
    grid-column: 1 / 3;
    grid-template-columns: 62px 34px;
    justify-content: end;
    padding-top: 6px;
    line-height: 9px;
    color: #111;
    white-space: nowrap;
}

.navbar {
    position: absolute;
    bottom: 0;
    left: 0;
    right: 0;
    display: flex;
    justify-content: center;
    gap: 3px;
}
.nav-set {
    display: flex;
    gap: 4px;
    height: 17px;
    padding: 0 3px;
    background-color: #c9cdc9;
}
.nav-set button {
    gap: 3px;
}
.comments {
    position: absolute;
    bottom: 0;
    left: 0;
    width: 188px;
    height: 14px;
    padding-left: 15px;
}
```
